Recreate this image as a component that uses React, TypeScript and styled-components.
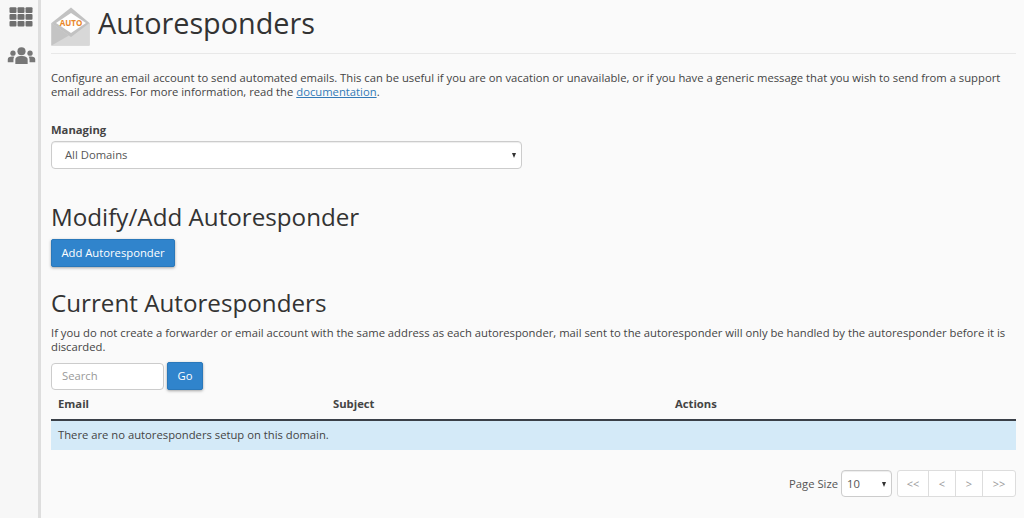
import React from "react";
import styled, { createGlobalStyle } from "styled-components";

const GlobalStyle = createGlobalStyle`
  html, body {
    margin: 0;
    padding: 0;
    height: 100%;
    overflow: hidden;
    background: #fafafa;
    font-family: "Open Sans", "Liberation Sans", sans-serif;
    color: #333;
  }
`;

const PAGE_BUTTONS = ["<<", "<", ">", ">>"];

export default function App() {
  return (
    <Page>
      <GlobalStyle />
      <SideBar>
        <svg width="24" height="20" viewBox="0 0 24 20" fill="#6f6f6f">
          {[0, 1, 2].map((row) =>
            [0, 1, 2].map((col) => (
              <rect key={row + "-" + col} x={col * 8 + 0.5} y={row * 6.8 + 0.3} width="7" height="5.6" rx="1" />
            ))
          )}
        </svg>
        <svg width="29" height="18" viewBox="0 0 30 19" fill="#777">
          <circle cx="15" cy="4.5" r="4.3" />
          <circle cx="6" cy="6.5" r="2.8" />
          <circle cx="24" cy="6.5" r="2.8" />
          <path d="M8.5 18v-4.5c0-2.8 2.4-4 6.5-4s6.5 1.2 6.5 4v4.5z" />
          <path d="M0.5 16v-3c0-2 1.8-3 4.5-3 1 0 1.7 0.1 2.4 0.4-0.6 0.8-0.9 1.8-0.9 3v2.6z" />
          <path d="M29.5 16v-3c0-2-1.8-3-4.5-3-1 0-1.7 0.1-2.4 0.4 0.6 0.8 0.9 1.8 0.9 3v2.6z" />
        </svg>
      </SideBar>
      <Content>
        <TitleRow>
          <svg width="39" height="39" viewBox="0 0 39 39">
            <path d="M0.5 16L20 0.5L38.5 16V38.5H0.5z" fill="#c2c2c2" />
            <path d="M5 16L20 6L35 16L20 26z" fill="#fff" />
            <path d="M0.5 16L20 30L38.5 16V38.5H0.5z" fill="#d8d8d8" />
            <path d="M0.5 38.5V16L18 28.5z" fill="#c4c4c4" />
            <AutoBadge x="20" y="18.5" textAnchor="middle">AUTO</AutoBadge>
          </svg>
          <Title>Autoresponders</Title>
        </TitleRow>
        <Description>
          Configure an email account to send automated emails. This can be useful if you are on vacation or unavailable, or if you have a generic message that you wish to send from a support email address. For more information, read the <DocLink>documentation</DocLink>.
        </Description>
        <FieldLabel>Managing</FieldLabel>
        <DomainSelect>
          All Domains
          <Caret />
        </DomainSelect>
        <SectionTitle>Modify/Add Autoresponder</SectionTitle>
        <PrimaryButton>Add Autoresponder</PrimaryButton>
        <CurrentTitle>Current Autoresponders</CurrentTitle>
        <Note>
          If you do not create a forwarder or email account with the same address as each autoresponder, mail sent to the autoresponder will only be handled by the autoresponder before it is discarded.
        </Note>
        <SearchRow>
          <SearchBox>Search</SearchBox>
          <GoButton>Go</GoButton>
        </SearchRow>
        <TableHead>
          <span>Email</span>
          <span>Subject</span>
          <span>Actions</span>
        </TableHead>
        <EmptyRow>There are no autoresponders setup on this domain.</EmptyRow>
        <Pager>
          <PagerLabel>Page Size</PagerLabel>
          <SizeSelect>
            10
            <Caret />
          </SizeSelect>
          <PageGroup>
            {PAGE_BUTTONS.map((label) => (
              <PageButton key={label}>{label}</PageButton>
            ))}
          </PageGroup>
        </Pager>
      </Content>
    </Page>
  );
}

const Page = styled.div`
  display: flex;
  height: 518px;
  width: 1024px;
  overflow: hidden;
`;

const SideBar = styled.aside`
  box-sizing: border-box;
  width: 41px;
  flex-shrink: 0;
  height: 100%;
  background: #f7f7f7;
  border-right: 3px solid #dedede;
  padding: 7px 0 0 4px;
  display: flex;
  flex-direction: column;
  align-items: center;
  gap: 20px;
`;

const Content = styled.main`
  flex: 1;
  min-width: 0;
  padding: 0 8px 0 10px;
  display: flex;
  flex-direction: column;
`;

const TitleRow = styled.div`
  display: flex;
  align-items: flex-start;
  gap: 8px;
  height: 54px;
  padding-top: 7px;
  box-sizing: border-box;
  border-bottom: 1px solid #e8e8e8;
`;

const AutoBadge = styled.text`
  font-family: "Open Sans", sans-serif;
  font-size: 8px;
  font-weight: 700;
  fill: #e8862a;
`;

const Title = styled.h1`
  margin: -2px 0 0;
  font-size: 28.8px;
  line-height: 36px;
  font-weight: 400;
  color: #333;
`;

const Description = styled.p`
  margin: 17px 0 0;
  font-size: 11.25px;
  line-height: 14px;
  color: #444;
`;

const DocLink = styled.a`
  color: #337ab7;
  text-decoration: underline;
`;

const FieldLabel = styled.div`
  margin-top: 23px;
  font-size: 11.25px;
  line-height: 16px;
  font-weight: 700;
  color: #444;
`;

const DomainSelect = styled.div`
  position: relative;
  box-sizing: border-box;
  margin-top: 3px;
  width: 471px;
  height: 28px;
  padding-left: 13px;
  font-size: 11.25px;
  line-height: 26px;
  color: #555;
  background: #fff;
  border: 1px solid #ccc;
  border-radius: 4px;
  box-shadow: inset 0 1px 1px rgba(0, 0, 0, 0.075);
`;

const Caret = styled.i`
  position: absolute;
  right: 5px;
  top: 11px;
  width: 0;
  height: 0;
  border-left: 2.5px solid transparent;
  border-right: 2.5px solid transparent;
  border-top: 5px solid #333;
`;

const SectionTitle = styled.h2`
  margin: 32px 0 0;
  font-size: 24.2px;
  line-height: 32px;
  font-weight: 400;
  color: #333;
`;

const PrimaryButton = styled.button`
  box-sizing: border-box;
  align-self: flex-start;
  margin-top: 6px;
  height: 28px;
  width: 124px;
  padding: 0 0 2px;
  font-family: inherit;
  font-size: 11.25px;
  color: #fff;
  background: #3084cc;
  border: 1px solid #2a78ba;
  border-radius: 2px;
  box-shadow: 0 1px 3px rgba(0, 0, 0, 0.35);
`;

const CurrentTitle = styled(SectionTitle)`
  margin-top: 20px;
`;

const Note = styled.p`
  margin: 7px 0 0;
  font-size: 11.25px;
  line-height: 14px;
  color: #444;
`;

const SearchRow = styled.div`
  display: flex;
  align-items: flex-start;
  gap: 3px;
  margin-top: 8px;
`;

const SearchBox = styled.div`
  box-sizing: border-box;
  width: 113px;
  height: 27px;
  margin-top: 1px;
  padding-left: 10px;
  font-size: 11.25px;
  line-height: 24px;
  color: #999;
  background: #fff;
  border: 1px solid #ccc;
  border-radius: 4px;
`;

const GoButton = styled(PrimaryButton)`
  margin-top: 0;
  width: 36px;
`;

const TableHead = styled.div`
  display: grid;
  grid-template-columns: 275px 342px 1fr;
  box-sizing: border-box;
  height: 31px;
  padding: 0 7px 2px;
  align-items: center;
  font-size: 11.25px;
  font-weight: 700;
  color: #444;
  border-bottom: 2px solid #3a4048;
`;

const EmptyRow = styled.div`
  box-sizing: border-box;
  height: 29px;
  padding: 0 7px;
  font-size: 11.25px;
  line-height: 27px;
  color: #444;
  background: #d4eaf8;
`;

const Pager = styled.div`
  display: flex;
  justify-content: flex-end;
  align-items: center;
  margin-top: 19px;
  height: 28px;
`;

const PagerLabel = styled.span`
  font-size: 11.25px;
  color: #555;
  margin-right: 3px;
`;

const SizeSelect = styled(DomainSelect)`
  margin-top: 0;
  width: 51px;
  height: 27px;
  padding-left: 5px;
  margin-right: 5px;
  line-height: 25px;
`;

const PageGroup = styled.div`
  display: flex;
  box-sizing: border-box;
  height: 27px;
  border: 1px solid #ddd;
  border-radius: 3px;
  background: #fff;
`;

const PageButton = styled.span`
  width: 26px;
  text-align: center;
  font-size: 11px;
  line-height: 25px;
  color: #999;
  border-left: 1px solid #ddd;
  &:first-child {
    border-left: 0;
    width: 30px;
  }
  &:last-child {
    width: 32px;
  }
`;
